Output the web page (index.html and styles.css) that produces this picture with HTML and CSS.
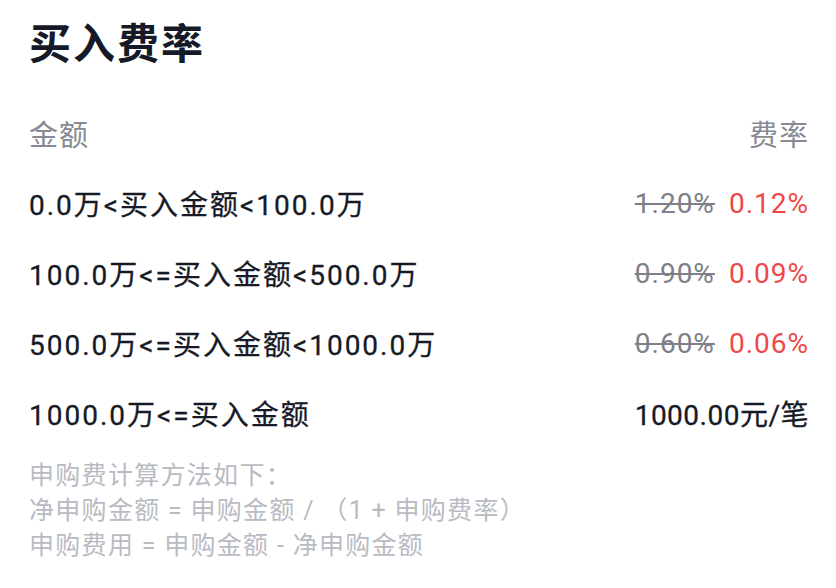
FILE: index.html
```html
<!DOCTYPE html>
<html lang="zh-CN">
<head>
<meta charset="utf-8">
<link rel="stylesheet" href="styles.css">
</head>
<body>
<div class="page">
  <h1 class="title">买入费率</h1>
  <div class="table">
    <div class="row head">
      <span>金额</span>
      <span>费率</span>
    </div>
    <div class="row">
      <span class="range">0.0万&lt;买入金额&lt;100.0万</span>
      <span class="rate"><s class="old">1.20%</s><span class="new">0.12%</span></span>
    </div>
    <div class="row">
      <span class="range">100.0万&lt;=买入金额&lt;500.0万</span>
      <span class="rate"><s class="old">0.90%</s><span class="new">0.09%</span></span>
    </div>
    <div class="row">
      <span class="range">500.0万&lt;=买入金额&lt;1000.0万</span>
      <span class="rate"><s class="old">0.60%</s><span class="new">0.06%</span></span>
    </div>
    <div class="row">
      <span class="range">1000.0万&lt;=买入金额</span>
      <span class="rate fixed">1000.00元/笔</span>
    </div>
  </div>
  <div class="note">
    <p>申购费计算方法如下：</p>
    <p>净申购金额 = 申购金额 / （1 + 申购费率）</p>
    <p>申购费用 = 申购金额 - 净申购金额</p>
  </div>
</div>
</body>
</html>
```

FILE: styles.css
```css
html, body {
  margin: 0;
  padding: 0;
  background: #ffffff;
}
body {
  font-family: "Roboto", "Noto Sans CJK SC", sans-serif;
  color: #161a26;
}
.page {
  width: 836px;
  height: 588px;
  box-sizing: border-box;
  padding: 13px 27px 0 29px;
}
.title {
  margin: 0;
  font-family: "Noto Sans CJK SC", sans-serif;
  font-size: 42px;
  font-weight: 600;
  letter-spacing: 2px;
  line-height: 56px;
}
.table {
  margin-top: 42px;
  display: flex;
  flex-direction: column;
}
.row {
  display: flex;
  justify-content: space-between;
  align-items: center;
  height: 70px;
  font-size: 28px;
}
.row.head {
  height: 44px;
  margin-bottom: 13px;
  color: #878a94;
  font-size: 29px;
  letter-spacing: 1px;
}
.range {
  font-weight: 400;
  letter-spacing: 2px;
  -webkit-text-stroke: 0.3px #161a26;
}
.rate {
  display: flex;
  gap: 14px;
  letter-spacing: 1px;
}
.old {
  color: #7d8089;
  text-decoration: line-through;
  text-decoration-thickness: 2px;
}
.new {
  color: #f04747;
}
.fixed {
  font-weight: 400;
  letter-spacing: 0.5px;
  -webkit-text-stroke: 0.3px #161a26;
}
.note {
  margin-top: 10px;
  color: #b9bbc3;
  font-size: 25px;
  letter-spacing: 1.3px;
  line-height: 35px;
}
.note p {
  margin: 0;
}
```
